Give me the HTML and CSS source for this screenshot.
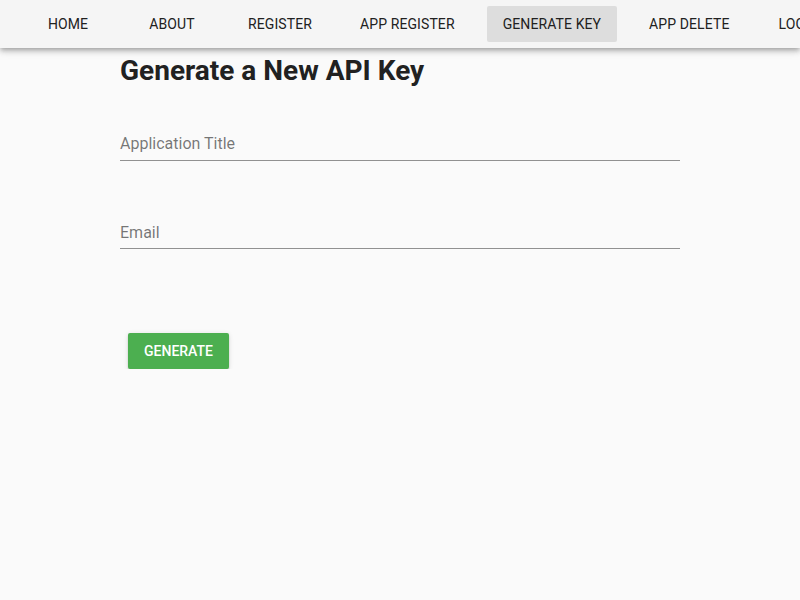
FILE: index.html
```html
<!DOCTYPE html>
<html>
<head>
<meta charset="utf-8">
<link rel="stylesheet" href="styles.css">
</head>
<body>
<nav class="toolbar">
  <a class="nav-btn">HOME</a>
  <a class="nav-btn">ABOUT</a>
  <a class="nav-btn">REGISTER</a>
  <a class="nav-btn">APP REGISTER</a>
  <a class="nav-btn active">GENERATE KEY</a>
  <a class="nav-btn">APP DELETE</a>
  <a class="nav-btn">LOGOUT</a>
</nav>
<main class="content">
  <h1 class="title">Generate a New API Key</h1>
  <div class="field field-first">
    <label class="field-label">Application Title</label>
  </div>
  <div class="field field-second">
    <label class="field-label">Email</label>
  </div>
  <div class="actions">
    <button class="btn-generate">GENERATE</button>
  </div>
</main>
</body>
</html>
```
FILE: styles.css
```css
* { box-sizing: border-box; }
html, body {
  margin: 0;
  padding: 0;
  background: #fafafa;
  font-family: Roboto, "Liberation Sans", sans-serif;
  color: rgba(0,0,0,0.87);
  overflow: hidden;
}
.toolbar {
  height: 48px;
  background: #f5f5f5;
  display: flex;
  align-items: center;
  padding: 0 16px;
  box-shadow: 0 2px 4px -1px rgba(0,0,0,.2), 0 4px 5px 0 rgba(0,0,0,.14), 0 1px 10px 0 rgba(0,0,0,.12);
  white-space: nowrap;
  overflow: hidden;
  position: relative;
  z-index: 2;
}
.nav-btn {
  flex: none;
  height: 36px;
  min-width: 88px;
  margin: 0 8px;
  padding: 0 16px;
  display: flex;
  align-items: center;
  justify-content: center;
  font-size: 14px;
  font-weight: 400;
  letter-spacing: 0.1px;
  color: #212121;
  border-radius: 2px;
}
.nav-btn.active { background: #dddddd; }
.content {
  width: 560px;
  margin: 0 auto;
  padding-top: 6px;
}
.title {
  margin: 0;
  font-size: 28px;
  font-weight: 700;
  line-height: 34px;
  color: #212121;
}
.field-first { margin-top: 46px; }
.field-second { margin-top: 62px; }
.field-label {
  display: block;
  font-size: 16px;
  line-height: 20px;
  color: rgba(0,0,0,0.54);
  padding-bottom: 5px;
  border-bottom: 1px solid rgba(0,0,0,0.42);
}
.field-first .field-label { padding-bottom: 6px; }
.actions {
  margin-top: 84px;
  padding-left: 8px;
}
.btn-generate {
  height: 36px;
  min-width: 88px;
  padding: 0 16px;
  border: none;
  border-radius: 2px;
  background: #4caf50;
  color: #fff;
  font-family: Roboto, "Liberation Sans", sans-serif;
  font-size: 14px;
  font-weight: 500;
  box-shadow: 0 3px 1px -2px rgba(0,0,0,.2), 0 2px 2px 0 rgba(0,0,0,.14), 0 1px 5px 0 rgba(0,0,0,.12);
}
```
